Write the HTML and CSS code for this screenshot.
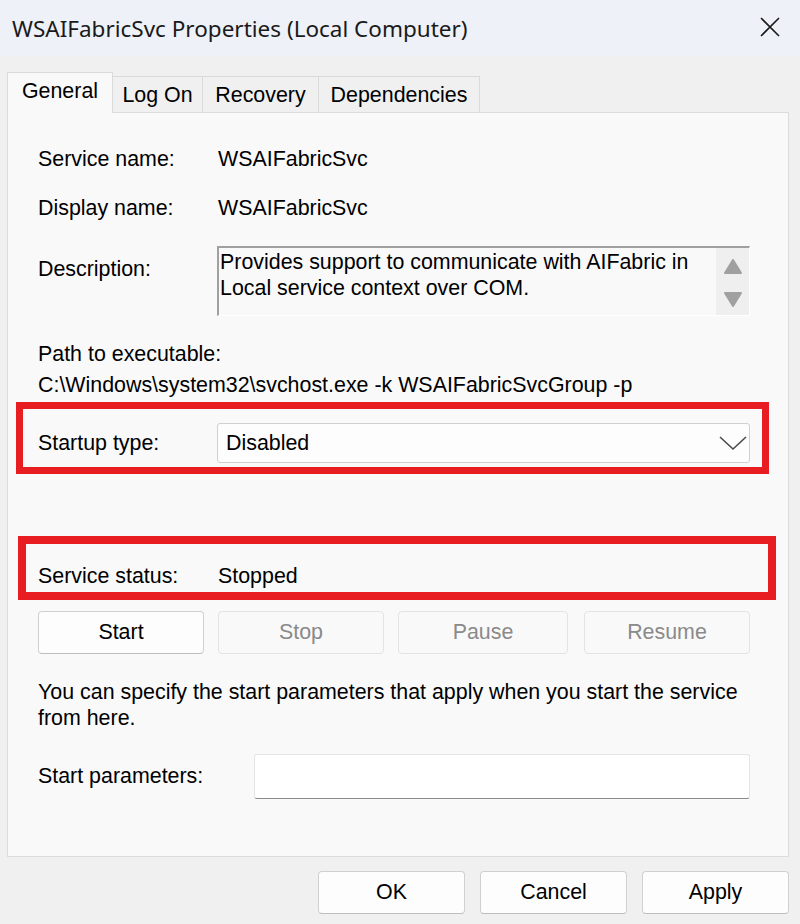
FILE: index.html
```html
<!DOCTYPE html>
<html lang="en">
<head>
    <meta charset="UTF-8">
    <meta name="viewport" content="width=device-width, initial-scale=1.0">
    <title>WSAIFabricSvc Properties (Local Computer)</title>
    <link rel="stylesheet" href="styles.css">
</head>
<body>
    <div class="titlebar">
        <span class="title">WSAIFabricSvc Properties (Local Computer)</span>
        <svg class="close" width="20" height="20" viewBox="0 0 20 20">
            <path d="M1 1 L19 19 M19 1 L1 19" stroke="#1a1a1a" stroke-width="1.6" fill="none"/>
        </svg>
    </div>

    <div class="tabs">
        <div class="tab tab-general active">General</div>
        <div class="tab tab-logon">Log On</div>
        <div class="tab tab-recovery">Recovery</div>
        <div class="tab tab-deps">Dependencies</div>
    </div>

    <div class="panel">
        <div class="row row-first">
            <span class="label">Service name:</span>
            <span>WSAIFabricSvc</span>
        </div>
        <div class="row row-second">
            <span class="label">Display name:</span>
            <span>WSAIFabricSvc</span>
        </div>

        <div class="desc-row">
            <span class="label desc-label">Description:</span>
            <div class="desc-box">
                <div class="desc-text">Provides support to communicate with AIFabric in Local service context over COM.</div>
                <div class="scrollbar">
                    <svg width="20" height="16" viewBox="0 0 20 16"><path d="M10 1 L18 14 L2 14 Z" fill="#a0a0a0" stroke="#a0a0a0" stroke-width="2" stroke-linejoin="round"/></svg>
                    <svg width="20" height="16" viewBox="0 0 20 16"><path d="M2 2 L18 2 L10 15 Z" fill="#a0a0a0" stroke="#a0a0a0" stroke-width="2" stroke-linejoin="round"/></svg>
                </div>
            </div>
        </div>

        <div class="path-label">Path to executable:</div>
        <div class="path-value">C:\Windows\system32\svchost.exe -k WSAIFabricSvcGroup -p</div>

        <div class="highlight startup-box">
            <span class="label startup-label">Startup type:</span>
            <div class="combo">
                <span>Disabled</span>
                <svg width="28" height="15" viewBox="0 0 28 15">
                    <path d="M1 1 L14 13 L27 1" stroke="#4a4a4a" stroke-width="1.6" fill="none"/>
                </svg>
            </div>
        </div>

        <div class="highlight status-box">
            <span class="label">Service status:</span>
            <span>Stopped</span>
        </div>

        <div class="control-buttons">
            <button class="btn">Start</button>
            <button class="btn" disabled>Stop</button>
            <button class="btn btn-wide" disabled>Pause</button>
            <button class="btn" disabled>Resume</button>
        </div>

        <p class="hint">You can specify the start parameters that apply when you start the service<br>from here.</p>

        <div class="params-row">
            <span class="params-label">Start parameters:</span>
            <div class="params-input"></div>
        </div>
    </div>

    <div class="footer">
        <button class="btn dialog-btn">OK</button>
        <button class="btn dialog-btn">Cancel</button>
        <button class="btn dialog-btn">Apply</button>
    </div>
</body>
</html>
```

FILE: styles.css
```css
body {
    margin: 0;
    width: 800px;
    height: 924px;
    overflow: hidden;
    background: #f0f0f0;
    color: #000;
    font-family: "Liberation Sans", Arial, sans-serif;
    font-size: 21.4px;
}

/* window caption */
.titlebar {
    height: 56px;
    background: #eef1f8;
    display: flex;
    align-items: center;
    justify-content: space-between;
    padding: 0 20px 0 12px;
}
.title {
    font-family: "Noto Sans", sans-serif;
    font-size: 22.5px;
    color: #1a1a1a;
}
.close {
    margin-top: -3px;
}

/* tab strip */
.tabs {
    display: flex;
    align-items: flex-end;
    height: 56px;
    padding-left: 7px;
}
.tab {
    height: 35px;
    line-height: 36px;
    text-align: center;
    border: 1px solid #dadada;
    border-left: none;
    border-bottom: none;
    background: #f0f0f0;
}
.tab.active {
    height: 40px;
    line-height: 36px;
    border-left: 1px solid #dadada;
    background: #f9f9f9;
    position: relative;
    z-index: 1;
    margin-bottom: -1px;
}
.tab-general { width: 104px; }
.tab-logon { width: 89px; }
.tab-recovery { width: 115px; }
.tab-deps { width: 160px; }

.panel {
    margin: 0 11px 0 7px;
    height: 745px;
    box-sizing: border-box;
    border: 1px solid #dcdcdc;
    background: #f9f9f9;
}

.row {
    display: flex;
    align-items: center;
    height: 40px;
    margin-left: 30px;
}
.row-first { margin-top: 26px; }
.row-second { margin-top: 9px; }
.label {
    width: 180px;
    flex-shrink: 0;
}

/* description with its sunken read-only box */
.desc-row {
    display: flex;
    align-items: flex-start;
    margin: 18px 0 0 30px;
}
.desc-label {
    margin-top: 11px;
    line-height: 24px;
}
.desc-box {
    display: flex;
    margin-left: -1px;
    width: 533px;
    height: 70px;
    box-sizing: border-box;
    border-top: 2px solid #a0a0a0;
    border-left: 2px solid #a0a0a0;
    border-right: 1px solid #fff;
    border-bottom: 1px solid #fff;
    background: #f9f9f9;
}
.desc-text {
    flex: 1;
    line-height: 26px;
    padding: 1px 0 0 1px;
}
.scrollbar {
    width: 33px;
    background: #efefef;
    display: flex;
    flex-direction: column;
    align-items: center;
    justify-content: space-between;
    padding: 11px 0 8px;
    box-sizing: border-box;
}

.path-label {
    margin: 26px 0 0 30px;
    line-height: 24px;
}
.path-value {
    margin: 7px 0 0 30px;
    line-height: 24px;
}

/* red call-out frames */
.highlight {
    display: flex;
    align-items: center;
    box-sizing: border-box;
    border-style: solid;
    border-color: #e81d22;
}
.startup-box {
    margin: 5px 0 0 8px;
    width: 753px;
    height: 72px;
    border-width: 7px;
    padding: 14px 0 4px 15px;
}
.startup-label {
    width: 179px;
}
.combo {
    width: 533px;
    height: 40px;
    box-sizing: border-box;
    border: 1px solid #d0d0d0;
    border-radius: 3px;
    background: #fdfdfd;
    display: flex;
    align-items: center;
    justify-content: space-between;
    padding: 0 2px 0 8px;
}
.status-box {
    margin: 62px 0 0 10px;
    width: 758px;
    height: 64px;
    border-width: 8px;
    padding: 20px 0 4px 12px;
    align-items: flex-start;
    line-height: 24px;
}

/* buttons */
.btn {
    font-family: inherit;
    font-size: 21.4px;
    color: #000;
    background: #fdfdfd;
    border: 1px solid #d0d0d0;
    border-bottom-color: #bdbdbd;
    border-radius: 4px;
    height: 43px;
    width: 166px;
    padding: 0;
}
.btn:disabled {
    color: #8a8a8a;
    background: #f9f9f9;
    border-color: #e3e3e3;
}
.control-buttons {
    display: flex;
    gap: 14px;
    margin: 11px 0 0 30px;
}
.btn-wide {
    width: 170px;
    margin-right: 2px;
}

.hint {
    margin: 25px 0 0 30px;
    line-height: 26px;
}

.params-row {
    display: flex;
    align-items: center;
    margin: 23px 0 0 30px;
    width: 712px;
    height: 45px;
}
.params-label {
    width: 216px;
}
.params-input {
    flex: 1;
    height: 45px;
    box-sizing: border-box;
    background: #fff;
    border: 1px solid #e5e5e5;
    border-bottom: 1px solid #8a8a8a;
    border-radius: 3px;
}

.footer {
    display: flex;
    justify-content: flex-end;
    gap: 15px;
    margin-top: 14px;
    padding-right: 11px;
}
.dialog-btn {
    width: 147px;
}
```
